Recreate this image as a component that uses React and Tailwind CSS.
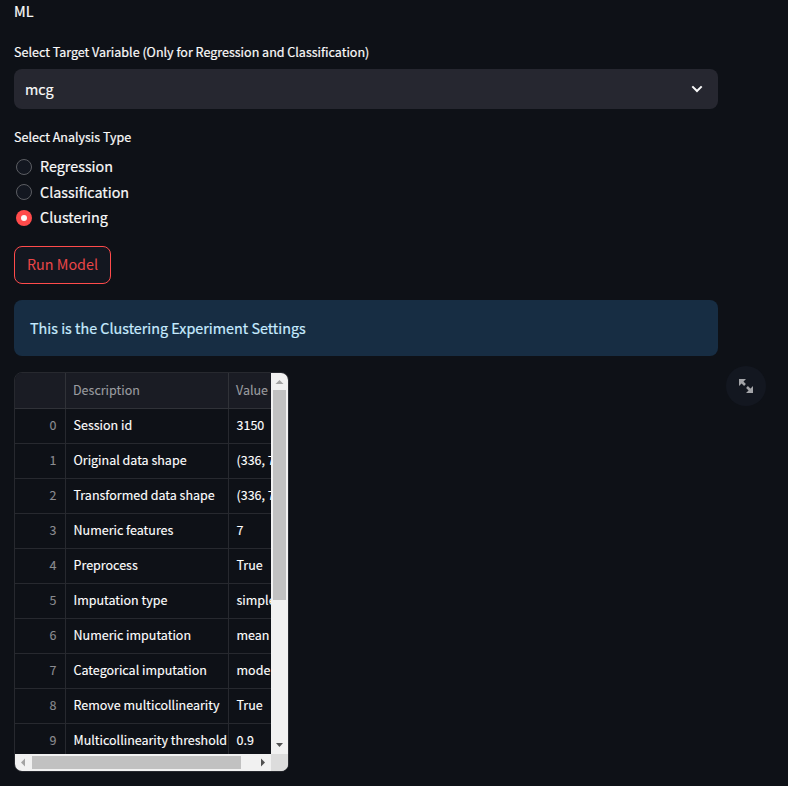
const settings = [
  ["Session id", "3150"],
  ["Original data shape", "(336, 7)"],
  ["Transformed data shape", "(336, 7)"],
  ["Numeric features", "7"],
  ["Preprocess", "True"],
  ["Imputation type", "simple"],
  ["Numeric imputation", "mean"],
  ["Categorical imputation", "mode"],
  ["Remove multicollinearity", "True"],
  ["Multicollinearity threshold", "0.9"],
];

function Radio({ label, checked }) {
  return (
    <label className="flex h-[25.5px] items-center gap-2 pl-0.5">
      {checked ? (
        <span className="flex size-4 items-center justify-center rounded-full bg-[#ff4b4b]">
          <span className="size-1.5 rounded-full bg-[#fafafa]" />
        </span>
      ) : (
        <span className="size-4 rounded-full border border-[#5c5e63] bg-[#131720]" />
      )}
      <span className="pb-[1.5px] text-[14.35px]">{label}</span>
    </label>
  );
}

function Row({ index, description, value }) {
  return (
    <div className="flex h-[35px] w-[400px] shrink-0 border-b border-[#27292f] text-[12.5px] leading-8 whitespace-nowrap text-white [-webkit-text-stroke:0.12px]">
      <div className="w-[51px] shrink-0 border-r border-[#27292f] pr-[8.5px] text-right text-[#8b8c90]">{index}</div>
      <div className="w-[163px] shrink-0 border-r border-[#27292f] pl-[7.5px]">{description}</div>
      <div className="pl-[7.5px]">{value}</div>
    </div>
  );
}

function DataTable() {
  return (
    <div className="flex h-[400px] w-[275px] flex-col overflow-hidden rounded-lg border border-[#27292f]">
      <div className="flex h-[381px] shrink-0">
        <div className="flex w-64 flex-col overflow-hidden">
          <div className="flex h-9 w-[400px] shrink-0 border-b border-[#303238] bg-[#1a1c24] text-[12.5px] leading-[33px] text-[#9b9ca0] [-webkit-text-stroke:0.1px]">
            <div className="w-[51px] shrink-0 border-r border-[#303238]" />
            <div className="w-[163px] shrink-0 border-r border-[#303238] pl-[7px]">Description</div>
            <div className="pl-[7px]">Value</div>
          </div>
          {settings.map(([description, value], i) => (
            <Row key={description} index={i} description={description} value={value} />
          ))}
        </div>
        <div className="flex w-[17px] flex-col items-center bg-[#f1f1f1]">
          <svg className="size-[17px]" viewBox="0 0 17 17" fill="#a3a3a3"><path d="M4.5 11h8L8.500 7z" /></svg>
          <div className="h-[210px] w-[13px] bg-[#c1c1c1]" />
          <svg className="mt-auto size-[17px]" viewBox="0 0 17 17" fill="#505050"><path d="M5 6h7l-3.500 4z" /></svg>
        </div>
      </div>
      <div className="flex h-[17px] items-center bg-[#f1f1f1]">
        <svg className="size-[17px]" viewBox="0 0 17 17" fill="#a3a3a3"><path d="M10 4.500v8L6 8.500z" /></svg>
        <div className="h-[13px] w-[209px] bg-[#c1c1c1]" />
        <svg className="ml-auto size-[17px]" viewBox="0 0 17 17" fill="#505050"><path d="M7 4.500v8l4-4z" /></svg>
        <div className="size-[17px] bg-[#dcdcdc]" />
      </div>
    </div>
  );
}

export default function App() {
  return (
    <main className="h-[786px] w-[788px] overflow-hidden bg-[#0e1117] pl-3.5 font-['Noto_Sans_CJK_SC',sans-serif] text-[#fafafa] [-webkit-text-stroke:0.2px]">
      <div className="h-10 text-[14.35px] leading-[22px]">ML</div>
      <div className="h-[29px] text-[12.53px] leading-6">
        Select Target Variable (Only for Regression and Classification)
      </div>
      <div className="flex h-10 w-[704px] items-center justify-between rounded-lg bg-[#262730] pr-3 pl-[11px]">
        <span className="text-[14.35px]">mcg</span>
        <svg className="size-[18px]" viewBox="0 0 18 18" fill="none" stroke="#fafafa" strokeWidth="2">
          <path d="M4.300 6.400 9 11l4.700-4.600" />
        </svg>
      </div>
      <div className="mt-4 h-[29px] text-[12.53px] leading-6">Select Analysis Type</div>
      <div className="h-[76.500px]">
        <Radio label="Regression" />
        <Radio label="Classification" />
        <Radio label="Clustering" checked />
      </div>
      <button className="mt-[15.500px] flex h-[38px] w-[97px] items-center justify-center rounded-lg border border-[#ff4b4b] bg-[#131720] pb-0.5 text-[14.35px] text-[#ea4648] [-webkit-text-stroke:0]">
        Run Model
      </button>
      <div className="mt-4 flex h-14 w-[704px] items-center rounded-lg bg-[#172d43] px-4 text-[14.35px] text-[#c7ebff]">
        This is the Clustering Experiment Settings
      </div>
      <div className="mt-4 flex items-start">
        <DataTable />
        <button className="-mt-1.5 ml-[437px] flex size-10 items-center justify-center rounded-full bg-[#131720]">
          <svg className="size-4" viewBox="0 0 16 16" fill="#a3a4a8" stroke="#a3a4a8">
            <path d="M1 1h7L1 8zM15 15H8l7-7z" stroke="none" />
            <path d="M3 3l4 4M9 9l4 4" strokeWidth="2.500" />
          </svg>
        </button>
      </div>
    </main>
  );
}
